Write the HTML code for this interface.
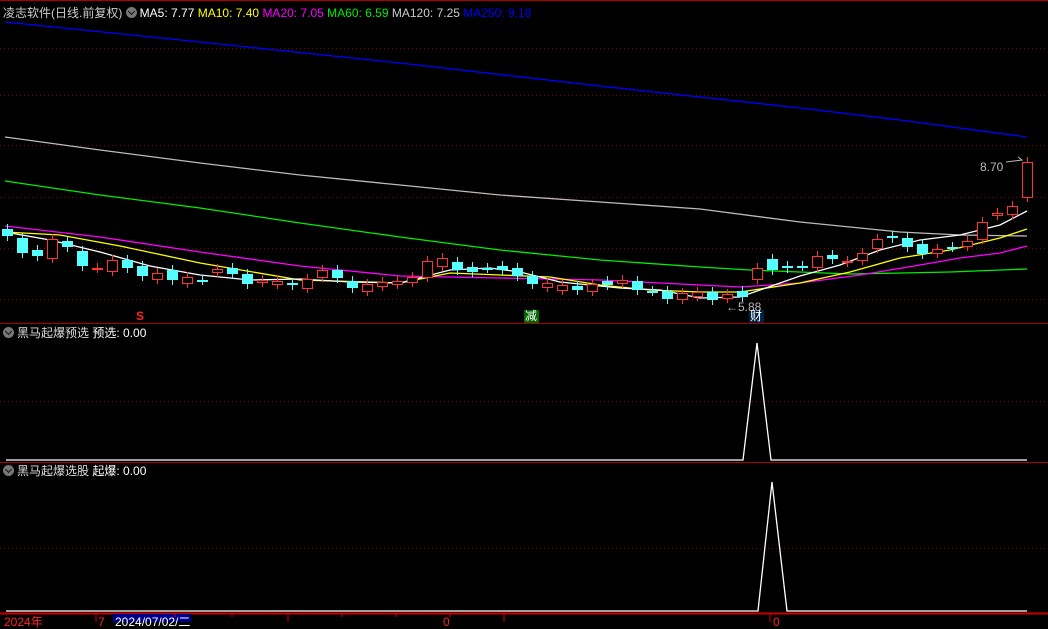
<!DOCTYPE html>
<html><head><meta charset="utf-8"><style>
body{margin:0;background:#000;width:1048px;height:622px;overflow:hidden;position:relative;font-family:"Liberation Sans","Noto Sans CJK SC",sans-serif}
.t{position:absolute;font-size:12px;white-space:nowrap;line-height:14px}
.ic{display:inline-block;width:11px;height:11px;border-radius:50%;background:#777;vertical-align:-1px;margin-right:3px;position:relative}
.ic:after{content:"";position:absolute;left:3px;top:2px;width:4px;height:4px;border-right:1.5px solid #111;border-bottom:1.5px solid #111;transform:rotate(45deg)}
svg{position:absolute;left:0;top:0}
</style></head><body>
<svg width="1048" height="622" id="s">
<line x1="0" y1="0.5" x2="1048" y2="0.5" stroke="#a00"/>
<g stroke="#700" stroke-dasharray="1,3">
<line x1="0" y1="48.5" x2="1048" y2="48.5"/><line x1="0" y1="95.5" x2="1048" y2="95.5"/><line x1="0" y1="145.5" x2="1048" y2="145.5"/><line x1="0" y1="197.5" x2="1048" y2="197.5"/><line x1="0" y1="248.5" x2="1048" y2="248.5"/><line x1="0" y1="299.5" x2="1048" y2="299.5"/>
<line x1="0" y1="401.5" x2="1048" y2="401.5"/><line x1="0" y1="548.5" x2="1048" y2="548.5"/>
</g>
<line x1="0" y1="323.5" x2="1048" y2="323.5" stroke="#a00"/>
<line x1="0" y1="462.5" x2="1048" y2="462.5" stroke="#a00"/>
<line x1="0" y1="613.5" x2="1048" y2="613.5" stroke="#c00" stroke-width="2"/>
<g fill="none" stroke-width="1.3">
<polyline stroke="#00f" points="5,22 200,42 400,63 600,86 800,108 900,120 1027,137"/>
<polyline stroke="#bbb" points="5,137 100,150 200,163 300,175 400,185 500,195 600,202 700,209 800,222 900,232 960,235 1027,236"/>
<polyline stroke="#0e0" points="5,181 100,195 200,208 300,223 400,237 500,250 600,260 700,267 750,270 850,274 950,272 1027,269"/>
<polyline stroke="#f0f" points="5,226 100,237 200,252 300,266 400,276 500,278 600,280 700,285 740,287 800,283 860,275 920,265 960,258 1000,253 1027,246"/>
<polyline stroke="#ff0" points="5,232 60,235 120,246 200,263 300,280 400,283 450,273 500,275 550,277 600,285 650,290 700,292 740,292 800,283 850,272 900,258 950,250 1000,238 1027,229"/>
<polyline stroke="#fff" points="5,232 50,240 100,252 150,266 200,275 250,280 300,279 350,282 400,283 450,270 490,268 520,272 560,282 620,288 660,290 700,298 740,297 760,290 800,276 840,265 880,250 920,240 960,235 1000,225 1027,211"/>
</g>
<g id="c"></g>
<polyline fill="none" stroke="#fff" stroke-width="1.3" points="6,460 743,460 757,343 771,460 1027,460"/>
<polyline fill="none" stroke="#fff" stroke-width="1.3" points="6,611 758,611 772,482 787,611 1027,611"/>
<polyline fill="none" stroke="#bbb" points="1006,162 1022,160 1018,157"/>
<rect x="524" y="310" width="15" height="13" fill="#060"/>
<rect x="749" y="310" width="15" height="13" fill="#024"/>
<rect x="113" y="614" width="78" height="8" fill="#008"/>
<g stroke="#c00"><line x1="96" y1="614" x2="96" y2="622"/><line x1="175" y1="614" x2="175" y2="617"/><line x1="232" y1="614" x2="232" y2="617"/><line x1="288" y1="614" x2="288" y2="622"/><line x1="342" y1="614" x2="342" y2="617"/><line x1="396" y1="614" x2="396" y2="617"/><line x1="450" y1="614" x2="450" y2="617"/><line x1="504" y1="614" x2="504" y2="622"/><line x1="770" y1="614" x2="770" y2="622"/></g>
</svg>
<div class="t" style="left:3px;top:6px;color:#ccc">凌志软件(日线.前复权) <span class="ic"></span><span style="color:#fff">MA5: 7.77</span> <span style="color:#ff0">MA10: 7.40</span> <span style="color:#f0f">MA20: 7.05</span> <span style="color:#0e0">MA60: 6.59</span> <span style="color:#ccc">MA120: 7.25</span> <span style="color:#00f">MA250: 9.18</span></div>
<div class="t" style="left:980px;top:160px;color:#bbb">8.70</div>
<div class="t" style="left:726px;top:300px;color:#bbb">←5.88</div>
<div class="t" style="left:136px;top:309px;color:#f22;font-weight:bold">S</div>
<div class="t" style="left:525px;top:309px;color:#fff">减</div>
<div class="t" style="left:750px;top:309px;color:#fff">财</div>
<div class="t" style="left:3px;top:326px;color:#ddd"><span class="ic"></span>黑马起爆预选 <span style="color:#fff">预选: 0.00</span></div>
<div class="t" style="left:3px;top:464px;color:#ddd"><span class="ic"></span>黑马起爆选股 <span style="color:#fff">起爆: 0.00</span></div>
<div class="t" style="left:4px;top:615px;color:#f22">2024年</div>
<div class="t" style="left:98px;top:615px;color:#f22">7</div>
<div class="t" style="left:115px;top:615px;color:#fff">2024/07/02/二</div>
<div class="t" style="left:443px;top:615px;color:#f22">0</div>
<div class="t" style="left:773px;top:615px;color:#f22">0</div>
<script>
var d=[[229,236,0],[238,253,0],[250,256,0],[239,258,1],[241,247,0],[251,266,0],[268,268,1],[260,271,1],[260,268,0],[266,276,0],[273,279,1],[270,280,0],[277,283,1],[280,280,0],[269,272,1],[268,274,0],[274,284,0],[280,282,1],[281,284,1],[283,285,0],[279,288,1],[270,277,1],[270,278,0],[281,288,0],[284,291,1],[282,286,1],[281,284,1],[277,282,1],[261,277,1],[258,266,1],[262,270,0],[267,272,0],[268,268,0],[266,270,0],[268,276,0],[276,284,0],[283,287,1],[285,290,1],[286,290,0],[284,291,1],[281,285,0],[280,283,1],[281,290,0],[291,291,0],[291,299,0],[293,299,1],[292,296,1],[292,300,0],[294,298,1],[291,297,0],[268,279,1],[259,270,0],[266,268,0],[266,266,0],[256,267,1],[255,259,0],[261,262,1],[253,260,1],[239,248,1],[236,238,0],[238,247,0],[244,254,0],[249,253,1],[247,247,0],[241,246,1],[222,239,1],[213,215,1],[206,214,1],[162,197,1]];
var h='';d.forEach(function(c,i){var x=7+i*15,col=c[2]?'#f33':'#5ff',t=c[0],b=c[1];
h+='<line x1="'+(x+.5)+'" y1="'+(t-5)+'" x2="'+(x+.5)+'" y2="'+(b+5)+'" stroke="'+col+'"/>';
if(b-t<2)h+='<rect x="'+(x-5)+'" y="'+t+'" width="11" height="2" fill="'+col+'"/>';
else if(c[2])h+='<rect x="'+(x-5)+'.5" y="'+t+'.5" width="10" height="'+(b-t)+'" fill="#000" stroke="'+col+'"/>';
else h+='<rect x="'+(x-5)+'" y="'+t+'" width="11" height="'+(b-t)+'" fill="'+col+'"/>';});
document.getElementById('c').innerHTML=h;
</script>
</body></html>
